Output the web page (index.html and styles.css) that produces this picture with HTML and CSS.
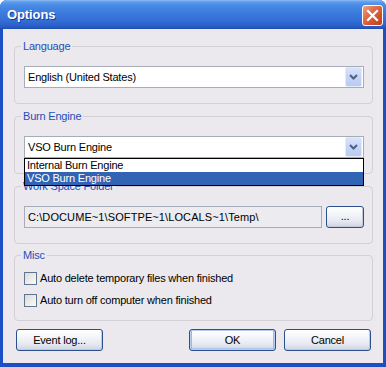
FILE: index.html
```html
<!DOCTYPE html>
<html>
<head>
<meta charset="utf-8">
<title>Options</title>
<link rel="stylesheet" href="styles.css">
</head>
<body>
<div class="window">
  <div class="titlebar">
    <span class="title">Options</span>
    <span class="close">
      <svg width="21" height="21" viewBox="0 0 21 21"><path d="M6 6 L15 15 M15 6 L6 15" stroke="#fff" stroke-width="2.2" stroke-linecap="square" fill="none"/></svg>
    </span>
  </div>
  <div class="client">
    <fieldset class="group g-lang">
      <legend>Language</legend>
      <div class="combo">
        <span class="combo-text">English (United States)</span>
        <span class="combo-btn"><svg width="9" height="6" viewBox="0 0 9 6"><path d="M1 1 L4.5 4.5 L8 1" stroke="#4d6185" stroke-width="2" fill="none"/></svg></span>
      </div>
    </fieldset>
    <fieldset class="group g-burn">
      <legend>Burn Engine</legend>
      <div class="combo-wrap">
        <div class="combo">
          <span class="combo-text">VSO Burn Engine</span>
          <span class="combo-btn"><svg width="9" height="6" viewBox="0 0 9 6"><path d="M1 1 L4.5 4.5 L8 1" stroke="#4d6185" stroke-width="2" fill="none"/></svg></span>
        </div>
        <ul class="droplist">
          <li>Internal Burn Engine</li>
          <li class="sel">VSO Burn Engine</li>
        </ul>
      </div>
    </fieldset>
    <fieldset class="group g-work">
      <legend>Work Space Folder</legend>
      <div class="path-row">
        <div class="textbox">C:\DOCUME~1\SOFTPE~1\LOCALS~1\Temp\</div>
        <span class="btn btn-browse">...</span>
      </div>
    </fieldset>
    <fieldset class="group g-misc">
      <legend>Misc</legend>
      <div class="check"><span class="box"></span><span>Auto delete temporary files when finished</span></div>
      <div class="check"><span class="box"></span><span>Auto turn off computer when finished</span></div>
    </fieldset>
    <div class="buttons">
      <span class="btn btn-main">Event log...</span>
      <div class="btn-pair">
        <span class="btn btn-main btn-default">OK</span>
        <span class="btn btn-main">Cancel</span>
      </div>
    </div>
  </div>
</div>
</body>
</html>
```

FILE: styles.css
```css
* { box-sizing: border-box; }
html, body { margin: 0; padding: 0; }
body {
  background: #ffffff;
  font-family: "Liberation Sans", Arial, sans-serif;
  font-size: 11px;
  letter-spacing: -0.2px;
  color: #000;
  width: 386px;
  height: 367px;
  overflow: hidden;
}
.window {
  width: 386px;
  height: 367px;
  display: flex;
  flex-direction: column;
  border-radius: 7px 7px 0 0;
  overflow: hidden;
  background: #1d4fc4;
}
.titlebar {
  height: 29px;
  flex: none;
  display: flex;
  align-items: center;
  justify-content: space-between;
  padding: 0 3px 0 7px;
  background: linear-gradient(to bottom, #8dbcf3 0px, #5d9cec 2px, #4a8ce6 5px, #3f80e0 10px, #3a78dc 15px, #3470d6 20px, #2c62cb 25px, #2456bd 28px, #1c48a8 29px);
}
.title {
  color: #fff;
  font-weight: bold;
  font-size: 13px;
  letter-spacing: -0.1px;
  text-shadow: 1px 1px 0 #173c94;
  padding-bottom: 1px;
}
.close {
  width: 21px;
  height: 21px;
  margin-top: 1px;
  border: 1px solid #fff;
  border-radius: 3px;
  background: linear-gradient(135deg, #f0a088 0%, #e2704c 35%, #d2502a 70%, #c04020 100%);
  display: flex;
  align-items: center;
  justify-content: center;
}
.close svg { display: block; margin: -1px; }
.client {
  flex: 1;
  margin: 0 3px 4px 3px;
  background: #ebe9ed;
  padding: 11px 10px 0 11px;
  display: flex;
  flex-direction: column;
}
.group {
  margin: 0;
  border: 1px solid #d2d0d4;
  border-radius: 4px;
  padding: 13px 8px 15px 9px;
  min-width: 0;
}
.group legend {
  color: #1f4fb8;
  padding: 0 2px;
  margin-left: -3px;
  line-height: 13px;
  height: 13px;
}
.g-burn { margin-top: 6px; }
.g-work { margin-top: 6px; }
.g-misc { margin-top: 5px; padding-top: 5px; padding-bottom: 9px; }
.combo-wrap { position: relative; }
.combo {
  height: 22px;
  border: 1px solid #a7adb6;
  background: #fff;
  display: flex;
  align-items: center;
  justify-content: space-between;
  padding-left: 3px;
}
.combo-text { white-space: nowrap; }
.combo-btn {
  width: 17px;
  height: 20px;
  margin-right: 1px;
  border: 1px solid #e2eafc;
  border-radius: 2px;
  background: linear-gradient(to bottom, #d8e3fb 0%, #c6d5f7 50%, #b9cbf3 100%);
  display: flex;
  align-items: center;
  justify-content: center;
}
.combo-btn svg { display: block; }
.droplist {
  position: absolute;
  z-index: 5;
  left: 0;
  right: 0;
  top: 22px;
  margin: 0;
  padding: 0;
  list-style: none;
  background: #fff;
  border: 1px solid #000;
}
.droplist li {
  height: 13px;
  line-height: 13px;
  padding-left: 2px;
  white-space: nowrap;
}
.droplist li.sel {
  background: #3164b5;
  color: #fff;
}
.path-row {
  display: flex;
  gap: 4px;
}
.textbox {
  flex: 1;
  height: 22px;
  border: 1px solid #a7adb6;
  background: #ecebef;
  display: flex;
  align-items: center;
  padding-left: 3px;
  white-space: nowrap;
  overflow: hidden;
  letter-spacing: 0.1px;
}
.btn {
  display: flex;
  align-items: center;
  justify-content: center;
  border: 1px solid #2c4f8e;
  border-radius: 3px;
  background: linear-gradient(to bottom, #ffffff 0%, #f6f7fa 30%, #e6e9f1 70%, #cdd4e2 100%);
  box-shadow: inset -1px -1px 0 #c3cbda;
  white-space: nowrap;
}
.btn-browse {
  width: 38px;
  height: 22px;
  padding-bottom: 2px;
}
.check {
  height: 22px;
  display: flex;
  align-items: center;
  gap: 3px;
}
.check .box {
  width: 13px;
  height: 13px;
  border: 1px solid #5f7590;
  background: linear-gradient(135deg, #dcdcd7 0%, #ebebe7 50%, #fbfbfa 100%);
}
.buttons {
  margin-top: 8px;
  display: flex;
  justify-content: space-between;
  margin-left: -10px;
  margin-right: -10px;
  padding-left: 12px;
  padding-right: 12px;
}
.btn-pair { display: flex; gap: 8px; }
.btn-main {
  width: 87px;
  height: 22px;
}
.btn-default {
  box-shadow: inset 0 0 0 1px #b8cdf2, inset 2px 0 0 #9bb8ea, inset -2px 0 0 #9bb8ea, inset 0 -2px 0 #b0c6ee;
}
```
